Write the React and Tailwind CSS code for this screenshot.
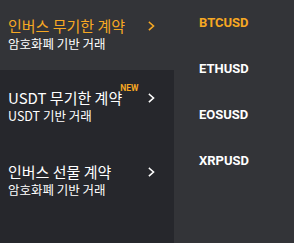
const tabs = [
  { title: "인버스 무기한 계약", sub: "암호화폐 기반 거래", active: true },
  { title: "USDT 무기한 계약", sub: "USDT 기반 거래", badge: "NEW" },
  { title: "인버스 선물 계약", sub: "암호화폐 기반 거래" },
];

const symbols = ["BTCUSD", "ETHUSD", "EOSUSD", "XRPUSD"];

const Chevron = ({ color }) => (
  <svg width="7" height="10" viewBox="0 0 7 10" fill="none">
    <path d="M1.5 1.5 L5.5 5 L1.5 8.5" stroke={color} strokeWidth="1.6" strokeLinecap="square" />
  </svg>
);

const App = () => {
  return (
    <div className="flex w-[294px] h-[243px] overflow-hidden bg-[#333438]">
      {/* tabs */}
      <div className="w-[174px] h-full flex flex-col bg-[#26272c] font-['Noto_Sans_CJK_KR',sans-serif]">
        {tabs.map((t, i) => (
          <div
            key={i}
            className={
              t.active
                ? "h-[70px] pt-[16px] pl-2 pr-[19px] bg-[#333438]"
                : "h-[74px] pt-[18px] pl-2 pr-[19px]"
            }
          >
            <div className="flex items-center justify-between h-[20px]">
              <span
                className={
                  t.active
                    ? "relative text-[15px] leading-[20px] text-[#f7a823]"
                    : "relative text-[15px] leading-[20px] text-white"
                }
              >
                {t.title}
                {t.badge && (
                  <span className="absolute left-full -ml-[2px] -top-[5px] text-[8.5px] leading-[10px] font-bold text-[#f7a823] font-['Roboto',sans-serif]">
                    {t.badge}
                  </span>
                )}
              </span>
              <Chevron color={t.active ? "#f7a823" : "#ffffff"} />
            </div>
            <div className="text-[12.5px] leading-[15px] text-white">{t.sub}</div>
          </div>
        ))}
      </div>
      {/* symbols */}
      <div className="flex-1 flex flex-col gap-[25px] pt-[12px] pl-[25px] font-['Roboto',sans-serif] font-bold text-[13px] leading-[21px]">
        {symbols.map((s, i) => (
          <div key={s} className={i === 0 ? "text-[#f7a823]" : "text-white"}>
            {s}
          </div>
        ))}
      </div>
    </div>
  );
};

export default App;
